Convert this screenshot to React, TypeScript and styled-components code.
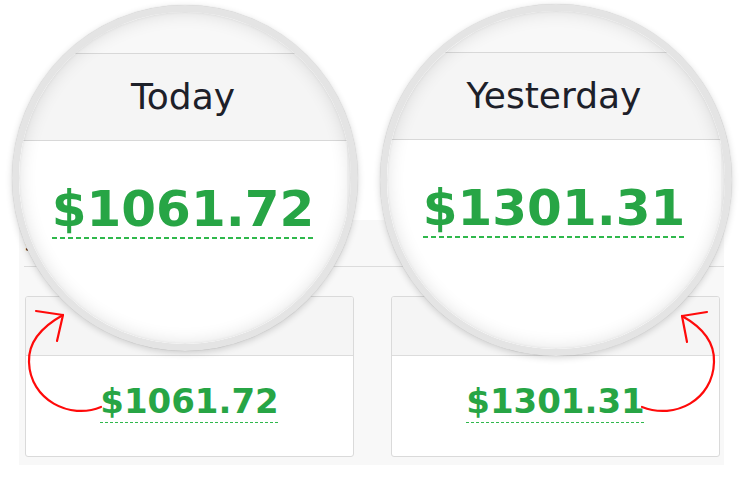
import React from "react";
import styled, { createGlobalStyle } from "styled-components";

const GlobalStyle = createGlobalStyle`
  html, body { margin: 0; padding: 0; background: #ffffff; }
  body { font-family: "DejaVu Sans", Verdana, sans-serif; }
`;

const GREEN = "#27a545";
const DASH = "#2fb84c";

const Stage = styled.div`
  position: relative;
  width: 742px;
  height: 480px;
  overflow: hidden;
  background: #ffffff;
  padding-top: 220px;
  box-sizing: border-box;
`;

const Panel = styled.section`
  margin-left: 19px;
  width: 705px;
  height: 245px;
  background: #f8f8f8;
  box-sizing: border-box;
  padding-left: 5px;
`;

const PanelHeader = styled.div`
  height: 46px;
  border-bottom: 1px solid #dcdcdc;
  display: flex;
  align-items: flex-end;
  padding: 0 0 12px 1px;
  box-sizing: content-box;
  height: 34px;
`;

const PanelTitle = styled.h2`
  margin: 0;
  font-size: 14px;
  font-weight: bold;
  color: #222;
`;

const CardGrid = styled.div`
  display: grid;
  grid-template-columns: 329px 329px;
  column-gap: 37px;
  padding: 29px 0 0 1px;
`;

const Card = styled.div`
  height: 161px;
  box-sizing: border-box;
  border: 1px solid #dadada;
  border-radius: 3px;
  background: #ffffff;
  overflow: hidden;
  display: flex;
  flex-direction: column;
`;

const CardHeader = styled.div`
  height: 58px;
  flex: none;
  background: #f5f5f5;
  border-bottom: 1px solid #dcdcdc;
  display: flex;
  align-items: center;
  justify-content: center;
  font-size: 24px;
  color: #1d2029;
`;

const CardBody = styled.div`
  flex: 1;
  text-align: center;
  padding-top: 28px;
`;

const Amount = styled.span<{ $size: number; $line: number; $dash: number; $gap: number }>`
  display: inline-block;
  font-size: ${(p) => p.$size}px;
  line-height: ${(p) => p.$size}px;
  font-weight: bold;
  color: ${GREEN};
  padding-bottom: 5px;
  background: repeating-linear-gradient(
      to right,
      ${DASH} 0 ${(p) => p.$dash}px,
      transparent ${(p) => p.$dash}px ${(p) => p.$dash + p.$gap}px
    )
    left bottom / 100% ${(p) => p.$line}px no-repeat;
`;

const Lens = styled.div<{ $x: number; $y: number; $size: number }>`
  position: absolute;
  left: ${(p) => p.$x}px;
  top: ${(p) => p.$y}px;
  width: ${(p) => p.$size}px;
  height: ${(p) => p.$size}px;
  box-sizing: border-box;
  border-radius: 50%;
  border: 7px solid #e4e4e4;
  overflow: hidden;
  background: #f8f8f8;
  box-shadow: 0 2px 7px rgba(0, 0, 0, 0.16), 0 0 1px rgba(0, 0, 0, 0.2);

  &::after {
    content: "";
    position: absolute;
    inset: 0;
    border-radius: 50%;
    box-shadow: inset 0 0 18px rgba(0, 0, 0, 0.12), inset 0 0 3px rgba(0, 0, 0, 0.08);
    pointer-events: none;
  }
`;

const LensContent = styled.div`
  display: flex;
  flex-direction: column;
  height: 100%;
  padding-right: 4px;
`;

const LensGap = styled.div`
  height: 41px;
  flex: none;
`;

const LensHeader = styled.div`
  height: 86px;
  flex: none;
  background: #f5f5f5;
  border-top: 1px solid #d8d8d8;
  border-bottom: 1px solid #d8d8d8;
  display: flex;
  align-items: center;
  justify-content: center;
  font-size: 36px;
  line-height: 36px;
  color: #1d2029;
`;

const LensBody = styled.div`
  flex: 1;
  background: #ffffff;
  text-align: center;
  padding-top: 43px;
`;

const ArrowLayer = styled.svg`
  position: absolute;
  left: 0;
  top: 0;
  pointer-events: none;
`;

type Stat = { label: string; value: string };

const stats: Stat[] = [
  { label: "Today", value: "$1061.72" },
  { label: "Yesterday", value: "$1301.31" },
];

const lenses = [
  { x: 12, y: 5, size: 346 },
  { x: 380, y: 4, size: 352 },
];

export default function App() {
  return (
    <>
      <GlobalStyle />
      <Stage>
        <Panel>
          <PanelHeader>
            <PanelTitle>Sales</PanelTitle>
          </PanelHeader>
          <CardGrid>
            {stats.map((s) => (
              <Card key={s.label}>
                <CardHeader>{s.label}</CardHeader>
                <CardBody>
                  <Amount $size={34} $line={1} $dash={3} $gap={2}>
                    {s.value}
                  </Amount>
                </CardBody>
              </Card>
            ))}
          </CardGrid>
        </Panel>

        {stats.map((s, i) => (
          <Lens key={s.label} $x={lenses[i].x} $y={lenses[i].y} $size={lenses[i].size}>
            <LensContent>
              <LensGap />
              <LensHeader>{s.label}</LensHeader>
              <LensBody>
                <Amount $size={50} $line={2} $dash={5} $gap={3}>
                  {s.value}
                </Amount>
              </LensBody>
            </LensContent>
          </Lens>
        ))}

        <ArrowLayer width="742" height="480" viewBox="0 0 742 480">
          <g fill="none" stroke="#ff0a0a" strokeWidth="2.2" strokeLinecap="round" strokeLinejoin="round">
            <path d="M101 407 C 70 420, 30 400, 29 362 C 28 340, 45 325, 63 315" />
            <path d="M36 311 L 63 315 L 57 341" />
            <path d="M642 407 C 675 420, 713 400, 714 362 C 715 340, 700 326, 682 316" />
            <path d="M707 312 L 682 316 L 687 342" />
          </g>
        </ArrowLayer>
      </Stage>
    </>
  );
}
